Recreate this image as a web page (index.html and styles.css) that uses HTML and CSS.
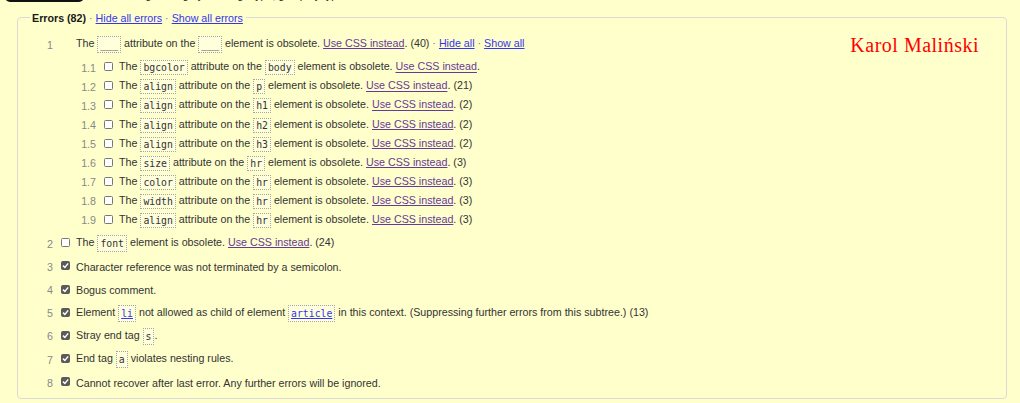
FILE: index.html
```html
<!DOCTYPE html>
<html lang="en">
<head>
<meta charset="utf-8">
<title>Errors</title>
<link rel="stylesheet" href="styles.css">
</head>
<body>
<div class="topstrip">
  <div class="topinner">
    <button class="tbtn" type="button">Filtering</button>
    <span class="ttext">Using filtering by message type, group by type</span>
  </div>
</div>
<fieldset class="panel">
  <legend class="legend"><b class="ltitle">Errors (82)</b> <span class="sep">·</span> <a class="lnk" href="#">Hide all errors</a> <span class="sep">·</span> <a class="lnk" href="#">Show all errors</a></legend>
  <ol class="list">
    <li class="item">
      <div class="line main">
        <span class="num">1</span><span class="cbspace"></span>
        <span class="msg">The <code class="code">___</code> attribute on the <code class="code">___</code> element is obsolete. <a class="vis" href="#">Use CSS instead</a>. (40) <span class="sep">·</span> <a class="lnk" href="#">Hide all</a> <span class="sep">·</span> <a class="lnk" href="#">Show all</a></span>
        <span class="author">Karol Maliński</span>
      </div>
      <ol class="sub">
        <li class="line subline"><span class="num">1.1</span><span class="cb"></span><span class="msg">The <code class="code">bgcolor</code> attribute on the <code class="code">body</code> element is obsolete. <a class="vis" href="#">Use CSS instead</a>.</span></li>
        <li class="line subline"><span class="num">1.2</span><span class="cb"></span><span class="msg">The <code class="code">align</code> attribute on the <code class="code">p</code> element is obsolete. <a class="vis" href="#">Use CSS instead</a>. (21)</span></li>
        <li class="line subline"><span class="num">1.3</span><span class="cb"></span><span class="msg">The <code class="code">align</code> attribute on the <code class="code">h1</code> element is obsolete. <a class="vis" href="#">Use CSS instead</a>. (2)</span></li>
        <li class="line subline"><span class="num">1.4</span><span class="cb"></span><span class="msg">The <code class="code">align</code> attribute on the <code class="code">h2</code> element is obsolete. <a class="vis" href="#">Use CSS instead</a>. (2)</span></li>
        <li class="line subline"><span class="num">1.5</span><span class="cb"></span><span class="msg">The <code class="code">align</code> attribute on the <code class="code">h3</code> element is obsolete. <a class="vis" href="#">Use CSS instead</a>. (2)</span></li>
        <li class="line subline"><span class="num">1.6</span><span class="cb"></span><span class="msg">The <code class="code">size</code> attribute on the <code class="code">hr</code> element is obsolete. <a class="vis" href="#">Use CSS instead</a>. (3)</span></li>
        <li class="line subline"><span class="num">1.7</span><span class="cb"></span><span class="msg">The <code class="code">color</code> attribute on the <code class="code">hr</code> element is obsolete. <a class="vis" href="#">Use CSS instead</a>. (3)</span></li>
        <li class="line subline"><span class="num">1.8</span><span class="cb"></span><span class="msg">The <code class="code">width</code> attribute on the <code class="code">hr</code> element is obsolete. <a class="vis" href="#">Use CSS instead</a>. (3)</span></li>
        <li class="line subline"><span class="num">1.9</span><span class="cb"></span><span class="msg">The <code class="code">align</code> attribute on the <code class="code">hr</code> element is obsolete. <a class="vis" href="#">Use CSS instead</a>. (3)</span></li>
      </ol>
    </li>
    <li class="line main"><span class="num">2</span><span class="cb"></span><span class="msg">The <code class="code">font</code> element is obsolete. <a class="vis" href="#">Use CSS instead</a>. (24)</span></li>
    <li class="line main"><span class="num">3</span><span class="cb on"><svg viewBox="0 0 9 9" class="tick"><path d="M2 4.6 L3.9 6.5 L7.2 2.4" /></svg></span><span class="msg">Character reference was not terminated by a semicolon.</span></li>
    <li class="line main"><span class="num">4</span><span class="cb on"><svg viewBox="0 0 9 9" class="tick"><path d="M2 4.6 L3.9 6.5 L7.2 2.4" /></svg></span><span class="msg">Bogus comment.</span></li>
    <li class="line main"><span class="num">5</span><span class="cb on"><svg viewBox="0 0 9 9" class="tick"><path d="M2 4.6 L3.9 6.5 L7.2 2.4" /></svg></span><span class="msg">Element <code class="code"><a class="lnk" href="#">li</a></code> not allowed as child of element <code class="code"><a class="lnk" href="#">article</a></code> in this context. (Suppressing further errors from this subtree.) (13)</span></li>
    <li class="line main"><span class="num">6</span><span class="cb on"><svg viewBox="0 0 9 9" class="tick"><path d="M2 4.6 L3.9 6.5 L7.2 2.4" /></svg></span><span class="msg">Stray end tag <code class="code">s</code>.</span></li>
    <li class="line main"><span class="num">7</span><span class="cb on"><svg viewBox="0 0 9 9" class="tick"><path d="M2 4.6 L3.9 6.5 L7.2 2.4" /></svg></span><span class="msg">End tag <code class="code">a</code> violates nesting rules.</span></li>
    <li class="line main"><span class="num">8</span><span class="cb on"><svg viewBox="0 0 9 9" class="tick"><path d="M2 4.6 L3.9 6.5 L7.2 2.4" /></svg></span><span class="msg">Cannot recover after last error. Any further errors will be ignored.</span></li>
  </ol>
</fieldset>
</body>
</html>
```
FILE: styles.css
```css
html, body {
  margin: 0;
  background: #ffffcc;
}
body {
  font-family: "Liberation Sans", Arial, sans-serif;
  font-size: 10.7px;
  color: #333;
}
.topstrip {
  height: 4px;
  overflow: hidden;
}
.topinner {
  display: flex;
  align-items: flex-end;
  gap: 40px;
  height: 22px;
  margin-top: -20.5px;
  padding-left: 5px;
}
.tbtn {
  box-sizing: border-box;
  width: 79px;
  height: 22px;
  border: 2px solid #111;
  border-radius: 5px;
  background: #fff;
  font: inherit;
  line-height: 12px;
  white-space: nowrap;
  overflow: hidden;
  padding: 0 4px 10px;
}
.ttext {
  line-height: 13px;
  color: #222;
}
.panel {
  margin: 7.5px 13px 0 17px;
  padding: 0 12px 4px;
  border: 1px solid #d9d9d9;
  border-radius: 4px;
  min-width: 0;
}
.legend {
  padding: 0 3px 0 2px;
  line-height: 12px;
  color: #222;
}
.ltitle {
  color: #1a1a1a;
}
.sep {
  color: #777;
}
.lnk {
  color: #3535f0;
  text-decoration: underline;
}
.vis {
  color: #663a9a;
  text-decoration: underline;
}
.list {
  list-style: none;
  margin: 9.5px 0 0;
  padding: 0;
}
.sub {
  list-style: none;
  margin: 2px 0 2px 43px;
  padding: 0;
}
.line {
  display: flex;
  align-items: center;
  white-space: nowrap;
}
.main {
  height: 23.2px;
}
.subline {
  height: 19.1px;
}
.num {
  flex: none;
  width: 23px;
  text-align: right;
  color: #888;
}
.cb, .cbspace {
  flex: none;
  width: 9px;
  height: 9px;
  margin: 0 6px 0 8px;
  box-sizing: border-box;
}
.cb {
  border: 1px solid #777;
  border-radius: 1.5px;
  background: #fff;
  position: relative;
  top: -1px;
}
.cb.on {
  background: #5a5a5a;
  border-color: #5a5a5a;
}
.tick {
  display: block;
  width: 9px;
  height: 9px;
  margin: -1px;
}
.tick path {
  fill: none;
  stroke: #fff;
  stroke-width: 1.5;
}
.msg {
  flex: none;
}
.code {
  display: inline-block;
  vertical-align: middle;
  font-family: "DejaVu Sans Mono", "Liberation Mono", monospace;
  font-size: 9.8px;
  line-height: 13px;
  padding: 1px 2px;
  border: 1px dotted #a5a5a5;
  background: #ffffdc;
  color: #333;
}
.subline .code {
  line-height: 11px;
}
.author {
  margin-left: auto;
  margin-right: 15px;
  font-family: "Liberation Serif", "Times New Roman", serif;
  font-size: 20px;
  line-height: 20px;
  letter-spacing: 0.5px;
  color: #f00;
}
```
